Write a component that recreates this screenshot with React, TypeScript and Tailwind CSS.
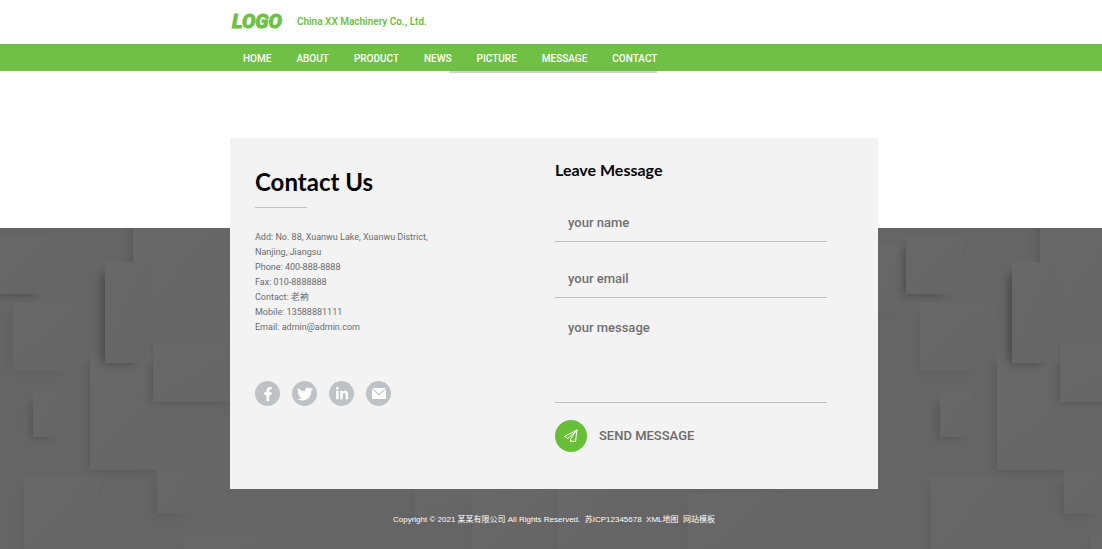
import { useState } from 'react';
import type { FormEvent } from 'react';
import { FaFacebookF, FaLinkedinIn, FaTwitter } from 'react-icons/fa';

const NAV_ITEMS = ['HOME', 'ABOUT', 'PRODUCT', 'NEWS', 'PICTURE', 'MESSAGE', 'CONTACT'];

const DETAILS = [
  'Phone: 400-888-8888',
  'Fax: 010-8888888',
  'Contact: 老衲',
  'Mobile: 13588881111',
  'Email: admin@admin.com',
];

// x, y, width, height, shadow strength
const BLOCKS = [
  [133, -40, 130, 157, 0.12],
  [13, 75, 75, 68, 0.06],
  [90, 125, 130, 117, 0.12],
  [153, 117, 110, 57, 0.14],
  [105, 34, 46, 101, 0.3],
  [33, 163, 33, 46, 0.16],
  [157, 242, 42, 44, 0.1],
  [24, 249, 75, 90, 0.08],
  [184, 307, 90, 60, 0.05],
  [415, 249, 120, 40, 0.03],
  [472, 262, 83, 90, 0.03],
  [557, 257, 56, 90, 0.03],
  [688, 266, 90, 90, 0.03],
  [878, 15, 28, 68, 0.04],
  [906, 8, 57, 58, 0.24],
  [-1, 8, 57, 58, 0.24],
];

function MailIcon() {
  return (
    <svg viewBox="0 0 14 11" className="w-3.5" fill="currentColor" aria-hidden="true">
      <path d="M0 0h14L7 6z" />
      <path d="M0 1.2V11h14V1.2L7 7.4z" />
    </svg>
  );
}

function PlaneIcon() {
  return (
    <svg
      viewBox="0 0 16 16"
      className="w-4"
      fill="none"
      stroke="currentColor"
      strokeWidth="1"
      strokeLinejoin="round"
      strokeLinecap="round"
      aria-hidden="true"
    >
      <path d="M14 2 1.5 8.5l3.3 2L14 2 7.5 11v3l1.8-2M14 2l-1.5 11.5h-2.8" />
    </svg>
  );
}

const SOCIALS = [
  { name: 'Facebook', icon: <FaFacebookF className="size-3.5" /> },
  { name: 'Twitter', icon: <FaTwitter className="size-4" /> },
  { name: 'LinkedIn', icon: <FaLinkedinIn className="size-3.5" /> },
  { name: 'Email', icon: <MailIcon /> },
];

function Backdrop() {
  return (
    <svg className="absolute inset-0 w-full h-full" aria-hidden="true">
      <defs>
        <filter id="soft" x="-50%" y="-50%" width="200%" height="200%">
          <feGaussianBlur stdDeviation="4" />
        </filter>
        <linearGradient id="face" x1="0" y1="0" x2="1" y2="1">
          <stop offset="0" stopColor="#686868" />
          <stop offset="1" stopColor="#656565" />
        </linearGradient>
        <pattern id="blocks" width="907" height="330" patternUnits="userSpaceOnUse">
          <rect width="907" height="330" fill="#656565" />
          {BLOCKS.map(([x, y, w, h, strength], i) => (
            <g key={i}>
              <rect
                x={x - 3}
                y={y + 12}
                width={w * 0.7}
                height={h - 11}
                fill="#000000"
                opacity={strength}
                filter="url(#soft)"
              />
              <rect x={x} y={y} width={w} height={h} fill="url(#face)" />
            </g>
          ))}
        </pattern>
      </defs>
      <rect width="100%" height="100%" fill="url(#blocks)" />
    </svg>
  );
}

export default function App() {
  const [form, setForm] = useState({ name: '', email: '', message: '' });

  function handleSubmit(e: FormEvent) {
    e.preventDefault();
    setForm({ name: '', email: '', message: '' });
  }

  const fieldClass =
    'block w-full px-[13px] border-b border-[#bfbfbf] bg-transparent text-[13px] font-medium text-[#707070] placeholder:text-[#707070] placeholder:opacity-100 outline-none';

  return (
    <div className="min-h-screen flex flex-col bg-white font-['Roboto','Noto_Sans_CJK_SC',sans-serif]">
      <header>
        <div className="max-w-[654px] h-11 mx-auto pl-2 pb-0.5 flex items-center gap-[15px] text-[#6fbf44]">
          <a
            href="#"
            className="text-[20px] leading-none font-extrabold italic [-webkit-text-stroke:1px_#6fbf44]"
          >
            LOGO
          </a>
          <span className="text-[10px] font-semibold">China XX Machinery Co., Ltd.</span>
        </div>
        <nav className="bg-[#70c046]">
          <ul className="max-w-[654px] h-[27px] mx-auto pl-[19px] pt-0.5 flex items-center gap-[25px]">
            {NAV_ITEMS.map(item => (
              <li key={item}>
                <a href="#" className="block text-[10px] font-medium text-white">
                  {item}
                </a>
              </li>
            ))}
          </ul>
        </nav>
        {/* Closed submenu edge */}
        <div className="max-w-[654px] mx-auto pl-[225px]">
          <div className="w-[208px] h-0.5 bg-[#cbd5c7]" />
        </div>
      </header>

      <div className="relative flex-1 flex flex-col mt-[155px] bg-[#666666]">
        <Backdrop />
        <div className="relative w-full max-w-[654px] mx-auto pl-1.5">
          <main className="-mt-[90px] min-h-[351px] flex bg-[#f3f3f3]">
            <section className="w-[300px] pl-[25px] pt-7">
              <h1 className="text-[24px] leading-8 font-bold text-black font-['Lato',sans-serif]">Contact Us</h1>
              <div className="w-[52px] mt-[9px] border-t border-[#c4c4c4]" />
              <address className="mt-[22px] text-[9px] leading-[15px] not-italic text-[#6b6b6b]">
                <p className="w-[180px]">Add: No. 88, Xuanwu Lake, Xuanwu District, Nanjing, Jiangsu</p>
                {DETAILS.map(line => (
                  <p key={line}>{line}</p>
                ))}
              </address>
              <div className="mt-[46px] flex gap-3">
                {SOCIALS.map(({ name, icon }) => (
                  <a
                    key={name}
                    href="#"
                    aria-label={name}
                    className="size-[25px] flex items-center justify-center rounded-full bg-[#bfc2c4] text-white"
                  >
                    {icon}
                  </a>
                ))}
              </div>
            </section>

            <section className="flex-1 pl-[25px] pr-[51px] pt-[21px]">
              <h2 className="text-[16px] leading-[22px] font-bold text-black font-['Lato',sans-serif]">
                Leave Message
              </h2>
              <form onSubmit={handleSubmit} className="mt-[23px]">
                <input
                  type="text"
                  aria-label="your name"
                  placeholder="your name"
                  value={form.name}
                  onChange={e => setForm({ ...form, name: e.target.value })}
                  className={`${fieldClass} h-[38px]`}
                />
                <input
                  type="email"
                  aria-label="your email"
                  placeholder="your email"
                  value={form.email}
                  onChange={e => setForm({ ...form, email: e.target.value })}
                  className={`${fieldClass} h-[38px] mt-[18px]`}
                />
                <textarea
                  aria-label="your message"
                  placeholder="your message"
                  value={form.message}
                  onChange={e => setForm({ ...form, message: e.target.value })}
                  className={`${fieldClass} h-[87px] mt-[18px] pt-0.5 leading-5 resize-none`}
                />
                <button type="submit" className="mt-[17px] flex items-center gap-3 text-[13px] font-medium text-[#6b6b6b]">
                  <span className="size-8 flex items-center justify-center rounded-full bg-[#66bf36] text-white">
                    <PlaneIcon />
                  </span>
                  SEND MESSAGE
                </button>
              </form>
            </section>
          </main>

          <footer className="py-[25px] text-center text-[8px] leading-3 text-white whitespace-pre font-['Liberation_Sans','Noto_Sans_CJK_SC',sans-serif]">
            Copyright © 2021 某某有限公司 All Rights Reserved.{'  '}
            <a href="#">苏ICP12345678</a>
            {'  '}
            <a href="#">XML地图</a>
            {'  '}
            <a href="#">网站模板</a>
          </footer>
        </div>
      </div>
    </div>
  );
}
